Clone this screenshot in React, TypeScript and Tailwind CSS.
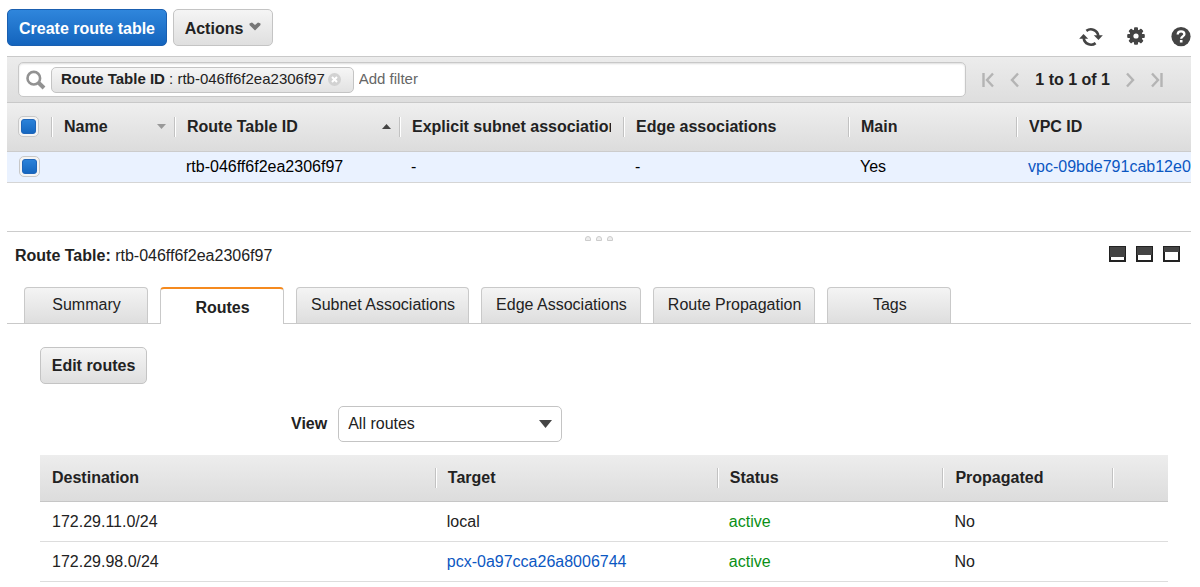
import { useState } from "react";
import type { ReactNode } from "react";

const tabs = [
  "Summary",
  "Routes",
  "Subnet Associations",
  "Edge Associations",
  "Route Propagation",
  "Tags",
];

const routes = [
  { destination: "172.29.11.0/24", target: "local", link: false },
  { destination: "172.29.98.0/24", target: "pcx-0a97cca26a8006744", link: true },
];

const columns = [
  { label: "Name", width: "w-[123px]", sort: "down" },
  { label: "Route Table ID", width: "w-[225px]", sort: "up" },
  { label: "Explicit subnet associations", width: "w-[224px]" },
  { label: "Edge associations", width: "w-[225px]" },
  { label: "Main", width: "w-[168px]" },
  { label: "VPC ID", width: "" },
];

const routeColumns = [
  { label: "Destination", width: "w-[35%]" },
  { label: "Target", width: "w-1/4" },
  { label: "Status", width: "w-1/5" },
  { label: "Propagated", width: "w-[15%]" },
];

const greyButton =
  "h-[37px] rounded-[5px] border border-[#c4c4c4] bg-linear-to-b from-[#f5f5f5] to-[#dfdfdf] pt-[2px] font-bold text-[#222]";

const Checkbox = ({ label }: { label: string }) => (
  <input
    type="checkbox"
    defaultChecked
    aria-label={label}
    className="flex size-[21px] appearance-none items-center justify-center rounded-[5px] border border-[#c8c8c8] bg-[#f4f4f4] checked:before:size-[15px] checked:before:rounded-[3px] checked:before:border checked:before:border-[#1f66ba] checked:before:bg-linear-to-b checked:before:from-[#2b82d9] checked:before:to-[#1567c0] checked:before:content-['']"
  />
);

const HeaderCell = ({ children }: { children: ReactNode }) => (
  <div className="flex h-5 items-center border-l border-[#c2c2c2] pr-3">
    <div className="flex h-5 min-w-0 flex-1 items-center justify-between border-l border-white pl-[11px] leading-5">
      {children}
    </div>
  </div>
);

const SortArrow = ({ dir }: { dir: string }) => (
  <svg width="9" height="5" viewBox="0 0 9 5" className="-mr-1 shrink-0">
    {dir === "up" ? (
      <path d="M0 5L4.5 0L9 5Z" fill="#444" />
    ) : (
      <path d="M0 0H9L4.5 5Z" fill="#999" />
    )}
  </svg>
);

const PageArrow = ({ label, d, w }: { label: string; d: string; w: number }) => (
  <button type="button" aria-label={label}>
    <svg width={w} height="16" viewBox={`0 0 ${w} 16`} fill="none" stroke="#b4b4b4" strokeWidth="2.4">
      <path d={d} />
    </svg>
  </button>
);

const PaneIcon = ({ label, top }: { label: string; top: number }) => (
  <button type="button" aria-label={label}>
    <svg width="17" height="16" viewBox="0 0 17 16">
      <rect width="17" height="16" fill="#222" />
      <rect x="1" y="1" width="15" height={top - 1} fill="#444" />
      <rect x="2" y={top} width="13" height={14 - top} fill="#fff" />
    </svg>
  </button>
);

const Toolbar = () => (
  <div className="flex items-start justify-between pb-[9px]">
    <div className="flex gap-[6px]">
      <button
        type="button"
        className="h-[37px] w-40 rounded-[5px] border border-[#1a5fb0] bg-linear-to-b from-[#2f86dc] to-[#1364bd] pt-[2px] font-bold text-white"
      >
        Create route table
      </button>
      <button type="button" className={`${greyButton} flex w-[100px] items-center justify-center gap-[6px]`}>
        Actions
        <svg width="12" height="9" viewBox="0 0 12 9" className="mb-1">
          <path d="M0.5 1.5L3 0.5L6 3L9 0.5L11.5 1.5V3L6 8.5L0.5 3Z" fill="#777" />
        </svg>
      </button>
    </div>
    <div className="flex items-center pt-[18px]">
      <button type="button" aria-label="Refresh">
        <svg width="24" height="20" viewBox="0 0 24 20" fill="none" stroke="#444" strokeWidth="2.6">
          <path d="M7.4 3.9A7.4 7.4 0 0 1 19.3 9" />
          <path d="M16.6 16.1A7.4 7.4 0 0 1 4.7 11" />
          <path d="M14.8 8.2H23.8L19.5 13Z" fill="#444" stroke="none" />
          <path d="M9.2 11.8H0.2L4.5 7Z" fill="#444" stroke="none" />
        </svg>
      </button>
      <button type="button" aria-label="Settings" className="ml-6">
        <svg width="18" height="20" viewBox="0 0 18 20">
          <g transform="translate(9 9)" fill="#444">
            {[0, 45, 90, 135].map((angle) => (
              <rect key={angle} x="-2" y="-8.8" width="4" height="17.6" rx="1" transform={`rotate(${angle})`} />
            ))}
            <circle r="6.6" />
            <circle r="2.6" fill="#fff" />
          </g>
        </svg>
      </button>
      <button type="button" aria-label="Help" className="ml-[26px]">
        <svg width="20" height="20" viewBox="0 0 20 20">
          <circle cx="10" cy="9.6" r="9.6" fill="#444" />
          <path
            d="M6.7 7.4C6.7 3.2 13.4 3.4 13.4 7.2C13.4 9.4 10.2 9.4 10.2 11.8"
            fill="none"
            stroke="#fff"
            strokeWidth="2.3"
          />
          <rect x="8.9" y="13" width="2.6" height="2.5" fill="#fff" />
        </svg>
      </button>
    </div>
  </div>
);

const FilterBar = () => (
  <div className="flex items-center gap-4 border-y border-[#c9c9c9] bg-linear-to-b from-[#ececec] to-[#dedede] py-[5px] pr-7 pl-[11px] text-[15px]">
    <div className="flex h-[35px] min-w-0 flex-1 items-center rounded-[5px] border border-[#c8c8c8] bg-white pl-[7px] shadow-[inset_0_1px_2px_#ddd]">
      <svg width="20" height="20" viewBox="0 0 20 20" fill="none" stroke="#929292" className="shrink-0">
        <circle cx="7.8" cy="8.2" r="6.3" strokeWidth="2.6" />
        <path d="M12.6 12.8L18 18" strokeWidth="4" />
      </svg>
      <div className="ml-[5px] flex h-[26px] shrink-0 items-center rounded-[5px] border border-[#c4c4c4] bg-linear-to-b from-[#f6f6f6] to-[#e2e2e2] pr-3 pl-[9px] text-[#222]">
        <b>Route Table ID</b>
        <span className="whitespace-pre"> : rtb-046ff6f2ea2306f97</span>
        <button type="button" aria-label="Remove filter" className="ml-[3px]">
          <svg width="13" height="13" viewBox="0 0 13 13">
            <circle cx="6.5" cy="6.5" r="6.5" fill="#d2d2d2" />
            <path d="M4 4L9 9M9 4L4 9" stroke="#fff" strokeWidth="2" />
          </svg>
        </button>
      </div>
      <input
        type="text"
        aria-label="Add filter"
        placeholder="Add filter"
        className="ml-[5px] min-w-0 flex-1 outline-none placeholder:text-[#666]"
      />
    </div>
    <PageArrow label="First page" w={12} d="M1.5 1V15M11 1.5L5 8L11 14.5" />
    <PageArrow label="Previous page" w={9} d="M8 1.5L2 8L8 14.5" />
    <b className="text-base">1 to 1 of 1</b>
    <PageArrow label="Next page" w={9} d="M1 1.5L7 8L1 14.5" />
    <PageArrow label="Last page" w={12} d="M1 1.5L7 8L1 14.5M10.5 1V15" />
  </div>
);

const RouteTables = () => (
  <table className="w-full table-fixed text-left whitespace-nowrap">
    <thead className="bg-linear-to-b from-[#efefef] to-[#dcdcdc]">
      <tr className="h-12 border-b border-[#ccc]">
        <th className="w-11 pl-[11px]">
          <Checkbox label="Select all" />
        </th>
        {columns.map((col) => (
          <th key={col.label} className={`${col.width} p-0`}>
            <HeaderCell>
              <span className="overflow-hidden">{col.label}</span>
              {col.sort && <SortArrow dir={col.sort} />}
            </HeaderCell>
          </th>
        ))}
      </tr>
    </thead>
    <tbody>
      <tr className="h-[31px] border-b border-[#d5d5d5] bg-[#eaf2ff] text-black">
        <td className="pl-3">
          <Checkbox label="Select rtb-046ff6f2ea2306f97" />
        </td>
        <td />
        <td className="pl-3">rtb-046ff6f2ea2306f97</td>
        <td className="pl-3">-</td>
        <td className="pl-3">-</td>
        <td className="pl-3">Yes</td>
        <td className="overflow-hidden pl-3">
          <a href="#vpc" className="text-[#0b57c2]">
            vpc-09bde791cab12e0
          </a>
        </td>
      </tr>
    </tbody>
  </table>
);

const RoutesPanel = () => (
  <div className="pt-[23px] pr-[23px] pl-[33px]">
    <button type="button" className={`${greyButton} w-[107px]`}>
      Edit routes
    </button>
    <div className="mt-[22px] ml-[251px] flex items-center gap-[11px]">
      <label htmlFor="view" className="font-bold">
        View
      </label>
      <div className="grid w-56 items-center">
        <select
          id="view"
          className="col-start-1 row-start-1 h-9 w-full appearance-none rounded-[5px] border border-[#c4c4c4] bg-white px-[9px]"
        >
          <option>All routes</option>
          <option>Active routes</option>
        </select>
        <svg
          width="13"
          height="8"
          viewBox="0 0 13 8"
          className="pointer-events-none col-start-1 row-start-1 mr-[10px] justify-self-end"
        >
          <path d="M0 0H13L6.5 8Z" fill="#444" />
        </svg>
      </div>
    </div>
    <table className="mt-[13px] w-full table-fixed text-left">
      <thead className="bg-linear-to-b from-[#ededed] to-[#dcdcdc]">
        <tr className="h-[47px] border-b border-[#c6c6c6]">
          {routeColumns.map((col, index) => (
            <th key={col.label} className={`${col.width} p-0`}>
              {index === 0 ? (
                <span className="pl-3">{col.label}</span>
              ) : (
                <HeaderCell>{col.label}</HeaderCell>
              )}
            </th>
          ))}
          <td className="p-0">
            <HeaderCell>{null}</HeaderCell>
          </td>
        </tr>
      </thead>
      <tbody>
        {routes.map((route) => (
          <tr key={route.destination} className="h-10 border-b border-[#ddd]">
            <td className="pl-3">{route.destination}</td>
            <td className="pl-3">
              {route.link ? (
                <a href="#peering" className="text-[#0b57c2]">
                  {route.target}
                </a>
              ) : (
                route.target
              )}
            </td>
            <td className="pl-3 text-[#0a8f16]">active</td>
            <td className="pl-3">No</td>
            <td />
          </tr>
        ))}
      </tbody>
    </table>
  </div>
);

const App = () => {
  const [active, setActive] = useState("Routes");

  return (
    <main className="bg-white pt-[9px] pr-[9px] pl-[7px] font-['Liberation_Sans',Arial,sans-serif] text-base text-[#222]">
      <Toolbar />
      <FilterBar />
      <RouteTables />
      <section className="mt-12 border-t border-[#ccc]">
        <div className="flex justify-center gap-[5px] pt-1">
          {[0, 1, 2].map((dot) => (
            <span key={dot} className="h-[5px] w-[6px] rounded-t-[3px] border border-[#ccc] bg-[#eee]" />
          ))}
        </div>
        <div className="flex items-start justify-between pt-[3px] pr-[11px] pl-2">
          <h2>
            <b>Route Table:</b> rtb-046ff6f2ea2306f97
          </h2>
          <div className="flex gap-[10px] pt-[2px]">
            <PaneIcon label="Collapse details" top={11} />
            <PaneIcon label="Split details" top={9} />
            <PaneIcon label="Expand details" top={6} />
          </div>
        </div>
        <div role="tablist" className="mt-[19px] flex gap-3 border-b border-[#c9c9c9] pl-[17px]">
          {tabs.map((tab) => (
            <button
              key={tab}
              type="button"
              role="tab"
              aria-selected={tab === active}
              onClick={() => setActive(tab)}
              className={`min-w-[124px] rounded-t-[4px] border-x border-[#c9c9c9] pr-[13px] pl-[14px] ${
                tab === active
                  ? "-mb-px h-[37px] border-t-2 border-t-[#f58a1f] bg-white pt-[3px] font-bold"
                  : "h-9 border-t bg-linear-to-b from-[#f4f4f4] to-[#dedede]"
              }`}
            >
              {tab}
            </button>
          ))}
        </div>
        <RoutesPanel />
      </section>
    </main>
  );
};

export default App;
